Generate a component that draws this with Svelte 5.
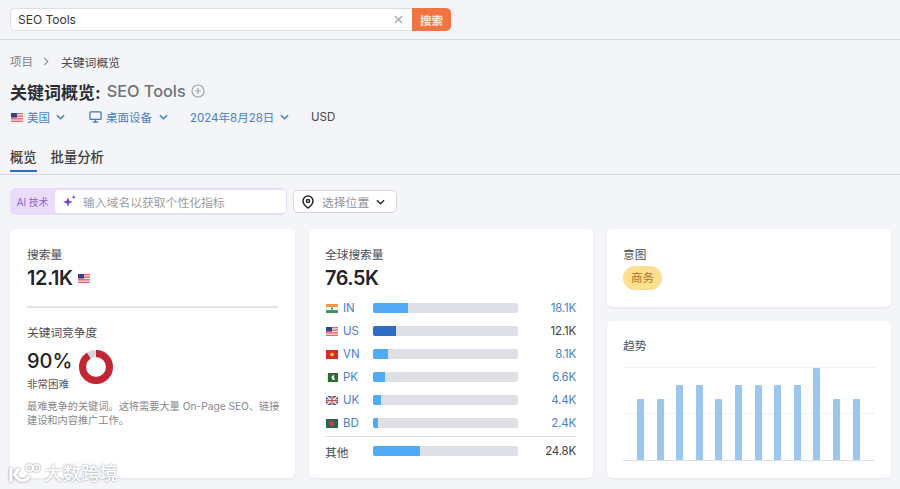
<script>
  const rows = [
    { code: 'IN', pct: 24, value: '18.1K' },
    { code: 'US', pct: 16, value: '12.1K', current: true },
    { code: 'VN', pct: 10.5, value: '8.1K' },
    { code: 'PK', pct: 8.6, value: '6.6K' },
    { code: 'UK', pct: 5.8, value: '4.4K' },
    { code: 'BD', pct: 3.2, value: '2.4K' }
  ];
  const trend = [61, 61, 75, 75, 61, 75, 75, 75, 75, 92, 61, 61];
</script>

{#snippet flag(code)}
  <svg class="flag" viewBox="0 0 12 9" aria-hidden="true">
    {#if code === 'US'}
      <rect width="12" height="9" fill="#e8666c" />
      <rect y="1.3" width="12" height="1.2" fill="#f6e6e8" />
      <rect y="3.9" width="12" height="1.2" fill="#f6e6e8" />
      <rect y="6.5" width="12" height="1.2" fill="#f6e6e8" />
      <rect width="6" height="4.6" fill="#3c3f86" />
    {:else if code === 'IN'}
      <rect width="12" height="3" fill="#ef9d45" />
      <rect y="3" width="12" height="3" fill="#f7f7f4" />
      <rect y="6" width="12" height="3" fill="#3f9a54" />
      <circle cx="6" cy="4.5" r="1" fill="#3d5a9e" />
    {:else if code === 'VN'}
      <rect width="12" height="9" fill="#d92b2b" />
      <circle cx="6" cy="4.5" r="1.8" fill="#f7d23e" />
    {:else if code === 'PK'}
      <rect width="12" height="9" fill="#e8efe4" />
      <rect x="2" width="10" height="9" fill="#2c6a2e" />
      <path d="M8.6 2.6a2.2 2.2 0 1 0 .8 3.4 2 2 0 0 1-.8-3.4z" fill="#fff" />
    {:else if code === 'UK'}
      <rect width="12" height="9" fill="#41467f" />
      <path d="M0 0l12 9M12 0L0 9" stroke="#f1e6ea" stroke-width="1.6" />
      <path d="M6 0v9M0 4.5h12" stroke="#f1e6ea" stroke-width="2.6" />
      <path d="M6 0v9M0 4.5h12" stroke="#d2434f" stroke-width="1.2" />
    {:else}
      <rect width="12" height="9" fill="#24694c" />
      <circle cx="5.6" cy="4.5" r="2.5" fill="#d8343f" />
    {/if}
  </svg>
{/snippet}

{#snippet chevron()}
  <svg class="chev" viewBox="0 0 10 6" aria-hidden="true"><path d="M1 1l4 4 4-4" /></svg>
{/snippet}

<div class="page">
  <header class="topbar">
    <div class="search">
      <div class="field">
        <span class="query">SEO Tools</span>
        <svg class="clear" viewBox="0 0 10 10" aria-hidden="true"><path d="M1 1l8 8M9 1l-8 8" /></svg>
      </div>
      <button class="go">搜索</button>
    </div>
  </header>

  <section class="head">
    <nav class="crumbs">
      <span class="muted">项目</span>
      <svg class="crumb-sep" viewBox="0 0 6 10" aria-hidden="true"><path d="M1 1l4 4-4 4" /></svg>
      <span class="current-crumb">关键词概览</span>
    </nav>
    <h1><span>关键词概览:</span> <em>SEO Tools</em>
      <svg class="plus" viewBox="0 0 14 14" aria-hidden="true"><circle cx="7" cy="7" r="6" /><path d="M7 4v6M4 7h6" /></svg>
    </h1>
    <div class="filters">
      <span class="filter first">{@render flag('US')}美国{@render chevron()}</span>
      <span class="filter second">
        <svg class="monitor" viewBox="0 0 14 13" aria-hidden="true"><rect x="1" y="1" width="12" height="8" rx="1" /><path d="M4 12h6M7 9v3" /></svg>
        桌面设备{@render chevron()}
      </span>
      <span class="filter third">2024年8月28日{@render chevron()}</span>
      <span class="usd">USD</span>
    </div>
    <div class="tabs">
      <span class="tab active">概览</span>
      <span class="tab">批量分析</span>
    </div>
  </section>

  <section class="tools">
    <div class="ai">
      <span class="ai-label">AI 技术</span>
      <div class="ai-field">
        <svg class="spark" viewBox="0 0 14 14" aria-hidden="true">
          <path d="M5.5 3l1.2 3.3L10 7.5 6.7 8.7 5.5 12 4.3 8.7 1 7.5l3.3-1.2z" />
          <path d="M11 1l.6 1.4L13 3l-1.4.6L11 5l-.6-1.4L9 3l1.4-.6z" />
        </svg>
        <span>输入域名以获取个性化指标</span>
      </div>
    </div>
    <div class="location">
      <svg class="pin" viewBox="0 0 12 14" aria-hidden="true"><path d="M6 1a5 5 0 0 1 5 5c0 3-3 5.6-5 7-2-1.4-5-4-5-7a5 5 0 0 1 5-5z" /><circle cx="6" cy="6" r="1.6" /></svg>
      <span>选择位置</span>
      <svg class="chev dark" viewBox="0 0 10 6" aria-hidden="true"><path d="M1 1l4 4 4-4" /></svg>
    </div>
  </section>

  <main class="grid">
    <article class="card volume">
      <h2>搜索量</h2>
      <div class="metric">12.1K {@render flag('US')}</div>
      <hr />
      <h2 class="kd-title">关键词竞争度</h2>
      <div class="kd">
        <div>
          <div class="pct">90%</div>
          <div class="level">非常困难</div>
        </div>
        <svg class="donut" viewBox="0 0 34 34" aria-hidden="true">
          <circle cx="17" cy="17" r="13.5" class="donut-bg" />
          <circle cx="17" cy="17" r="13.5" class="donut-fg" pathLength="100" stroke-dasharray="91 9" transform="rotate(-90 17 17)" />
        </svg>
      </div>
      <p>最难竞争的关键词。这将需要大量 On-Page SEO、链接建设和内容推广工作。</p>
    </article>

    <article class="card global">
      <h2>全球搜索量</h2>
      <div class="metric">76.5K</div>
      <div class="rows">
        {#each rows as r}
          <div class="row">
            {@render flag(r.code)}
            <span class="code">{r.code}</span>
            <span class="track"><span class="fill" class:current={r.current} style="width:{r.pct}%"></span></span>
            <span class="val" class:plain={r.current}>{r.value}</span>
          </div>
        {/each}
      </div>
      <div class="row other">
        <span class="other-label">其他</span>
        <span class="track"><span class="fill" style="width:32.5%"></span></span>
        <span class="val plain">24.8K</span>
      </div>
    </article>

    <div class="side">
      <article class="card intent">
        <h2>意图</h2>
        <span class="pill">商务</span>
      </article>
      <article class="card trend">
        <h2>趋势</h2>
        <div class="chart">
          <i class="gridline top"></i>
          <i class="gridline mid"></i>
          <div class="bars">
            {#each trend as h}
              <span class="bar" style="height:{h}px"></span>
            {/each}
          </div>
        </div>
      </article>
    </div>
  </main>

  <div class="mark">
    <svg viewBox="0 0 32 22" aria-hidden="true">
      <path d="M2 6v14" />
      <path d="M10 6 5.500 12.500c2 3.500 4.500 6 8 6 3 0 5.500-1.500 6.500-4.500" />
      <circle class="thin" cx="20.500" cy="6" r="3.200" />
      <circle class="thin" cx="27.500" cy="6" r="3.200" />
    </svg>
    <span>大数跨境</span>
  </div>
</div>

<style>
  :global(body) {
    margin: 0;
    background: #f3f5f9;
  }
  .page {
    position: relative;
    width: 900px;
    height: 489px;
    overflow: hidden;
    background: #f3f5f9;
    color: #2a2c31;
    font-family: Inter, "Noto Sans CJK SC", sans-serif;
    font-size: 12px;
  }
  .topbar {
    height: 40px;
    box-sizing: border-box;
    padding: 8px 10px 0;
    border-bottom: 1px solid #d5d7dc;
  }
  .search {
    display: flex;
    width: 441px;
    height: 23px;
  }
  .field {
    flex: 1;
    display: flex;
    align-items: center;
    justify-content: space-between;
    padding: 0 9px 0 7px;
    background: #fff;
    border: 1px solid #dcdee3;
    border-right: 0;
    border-radius: 5px 0 0 5px;
  }
  .query {
    font-size: 12px;
    color: #34363b;
  }
  .clear {
    width: 9px;
    height: 9px;
    fill: none;
    stroke: #a6a9af;
    stroke-width: 1.5;
  }
  .go {
    width: 39px;
    border: 0;
    padding: 0;
    border-radius: 0 5px 5px 0;
    background: #ef7642;
    color: #fde9df;
    font: 600 11.5px Inter, "Noto Sans CJK SC", sans-serif;
  }
  .head {
    box-sizing: border-box;
    height: 135px;
    padding: 13px 0 0 10px;
    border-bottom: 1px solid #d5d7dc;
  }
  .crumbs {
    display: flex;
    align-items: center;
    height: 16px;
    font-size: 11.5px;
    color: #44464c;
  }
  .current-crumb {
    font-size: 11.8px;
  }
  .muted {
    color: #7d8087;
  }
  .crumb-sep {
    width: 6px;
    height: 9px;
    margin: 0 12px 0 10px;
    fill: none;
    stroke: #8c8f96;
    stroke-width: 1.2;
  }
  h1 {
    display: flex;
    align-items: center;
    gap: 6px;
    margin: 11px 0 0;
    height: 22px;
    font-size: 17px;
    font-weight: 700;
    color: #2c2e33;
  }
  h1 em {
    font-style: normal;
    font-weight: 500;
    color: #6f7278;
    font-size: 16.3px;
  }
  .plus {
    width: 14px;
    height: 14px;
    margin-left: -1px;
    fill: none;
    stroke: #a3a6ac;
    stroke-width: 1.2;
  }
  .filters {
    display: flex;
    align-items: center;
    height: 16px;
    margin-top: 7px;
    font-size: 11.5px;
    color: #4a7ec8;
  }
  .filter {
    display: flex;
    align-items: center;
  }
  .filter .flag {
    margin-left: 1px;
    margin-right: 4px;
  }
  .first {
    width: 79px;
  }
  .second {
    width: 101px;
  }
  .third {
    width: 121px;
  }
  .usd {
    color: #44464c;
  }
  .monitor {
    width: 13px;
    height: 12px;
    margin-right: 4px;
    fill: none;
    stroke: #3f76c4;
    stroke-width: 1.4;
  }
  .chev {
    width: 9px;
    height: 6px;
    margin-left: 6px;
    fill: none;
    stroke: #3f76c4;
    stroke-width: 1.6;
  }
  .second .chev {
    margin-left: 7px;
  }
  .chev.dark {
    stroke: #2a2c31;
    margin-left: 7px;
  }
  .tabs {
    display: flex;
    gap: 14px;
    margin-top: 22px;
    font-size: 13.3px;
    font-weight: 500;
  }
  .tab {
    height: 25px;
    color: #3c3e44;
    line-height: 20px;
    box-sizing: border-box;
  }
  .tab.active {
    border-bottom: 2px solid #2f6fc9;
  }
  .tools {
    display: flex;
    align-items: center;
    gap: 6px;
    margin: 13px 0 0 10px;
  }
  .ai {
    display: flex;
    align-items: center;
    width: 277px;
    height: 27px;
    box-sizing: border-box;
    padding: 2px 1px 2px 0;
    background: #e9dcfb;
    border-radius: 6px;
  }
  .ai-label {
    width: 45px;
    flex: none;
    text-align: center;
    font-size: 9.8px;
    color: #8d5fdc;
  }
  .ai-field {
    flex: 1;
    height: 100%;
    display: flex;
    align-items: center;
    gap: 6px;
    padding-left: 7px;
    box-sizing: border-box;
    background: #fff;
    border-radius: 4px;
    color: #9a9da4;
    font-size: 11.8px;
  }
  .spark {
    width: 15px;
    height: 15px;
    fill: #7c3fdc;
  }
  .location {
    display: flex;
    align-items: center;
    width: 104px;
    height: 23px;
    box-sizing: border-box;
    padding-left: 8px;
    background: #fff;
    border: 1px solid #d6d8dd;
    border-radius: 5px;
    color: #8f9299;
    font-size: 11.8px;
  }
  .pin {
    width: 12px;
    height: 14px;
    margin-right: 8px;
    fill: none;
    stroke: #26282c;
    stroke-width: 1.5;
  }
  .grid {
    display: grid;
    grid-template-columns: 285px 284px 284px;
    gap: 14px;
    margin: 14px 0 0 10px;
    height: 249px;
  }
  .card {
    background: #fff;
    border-radius: 5px;
    box-shadow: 0 1px 2px rgba(30, 40, 60, 0.08);
    box-sizing: border-box;
    padding: 18px 17px 0;
  }
  h2 {
    margin: 0;
    height: 16px;
    line-height: 16px;
    font-size: 11.7px;
    font-weight: 400;
    color: #4c4e54;
  }
  .metric {
    display: flex;
    align-items: center;
    gap: 5px;
    height: 24px;
    margin-top: 3px;
    font-size: 19.8px;
    font-weight: 600;
    letter-spacing: -0.4px;
    color: #222429;
  }
  .flag {
    width: 12px;
    height: 9px;
    flex: none;
  }
  hr {
    height: 2px;
    margin: 16px 0 0;
    border: 0;
    background: #e2e3e7;
  }
  .kd-title {
    margin-top: 17px;
  }
  .kd {
    display: flex;
    gap: 7px;
    margin-top: 7px;
  }
  .pct {
    height: 26px;
    line-height: 26px;
    font-size: 20px;
    font-weight: 500;
    color: #222429;
  }
  .level {
    margin-top: 4px;
    font-size: 10.5px;
    line-height: 14px;
    color: #55575d;
  }
  .donut {
    width: 34px;
    height: 34px;
    margin-top: 2px;
    fill: none;
    stroke-width: 7;
  }
  .donut-bg {
    stroke: #d5d6da;
  }
  .donut-fg {
    stroke: #c32535;
  }
  .card p {
    margin: 7px -4px 0 0;
    font-size: 10.2px;
    line-height: 14px;
    color: #85888f;
  }
  .global {
    padding: 18px 17px 0 16px;
  }
  .rows {
    display: flex;
    flex-direction: column;
    gap: 13px;
    margin-top: 13px;
  }
  .row {
    display: flex;
    align-items: center;
    height: 10px;
  }
  .row > .flag {
    margin-left: 1px;
  }
  .code {
    width: 30px;
    margin-left: 5px;
    color: #4a7ec8;
    font-size: 11.5px;
  }
  .track {
    width: 145px;
    height: 10px;
    flex: none;
    display: block;
    border-radius: 2px;
    background: #dfe0e5;
    overflow: hidden;
  }
  .fill {
    display: block;
    height: 100%;
    background: #4fabf5;
  }
  .fill.current {
    background: #2b6cc4;
  }
  .val {
    flex: 1;
    text-align: right;
    color: #4a7ec8;
    font-size: 11.5px;
    letter-spacing: -0.2px;
  }
  .val.plain {
    color: #3c3e44;
  }
  .other {
    margin-top: 8px;
    padding-top: 9px;
    border-top: 1px solid #dedfe3;
    height: 10px;
    box-sizing: content-box;
  }
  .other-label {
    width: 48px;
    font-size: 11.7px;
    color: #44464c;
  }
  .side {
    display: flex;
    flex-direction: column;
    gap: 14px;
  }
  .side .card {
    padding-left: 16px;
  }
  .intent {
    height: 78px;
  }
  .pill {
    display: block;
    width: 39px;
    height: 24px;
    margin-top: 3px;
    line-height: 24px;
    text-align: center;
    border-radius: 12px;
    background: #fbe08f;
    color: #a9772e;
    font-size: 11.5px;
  }
  .side .trend {
    height: 157px;
    padding-top: 17px;
  }
  .chart {
    position: relative;
    height: 93px;
    margin-top: 13px;
    width: 251px;
    border-bottom: 1px solid #dcdde2;
  }
  .gridline {
    position: absolute;
    left: 0;
    right: -2px;
    height: 1px;
    background: #f1f2f5;
  }
  .gridline.top {
    top: 0;
  }
  .gridline.mid {
    top: 46px;
  }
  .bars {
    position: absolute;
    inset: 0;
    display: flex;
    align-items: flex-end;
    gap: 12.6px;
    padding-left: 14px;
  }
  .bar {
    width: 7px;
    flex: none;
    border-radius: 1px 1px 0 0;
    background: #9dc6ec;
  }
  .mark {
    position: absolute;
    left: 9px;
    top: 460px;
    display: flex;
    align-items: center;
    gap: 3px;
    color: #fff;
    font-size: 18.5px;
    font-weight: 500;
    line-height: 24px;
    text-shadow: 0 0 2px rgba(90, 95, 105, 0.75);
  }
  .mark span {
    margin-top: 1px;
  }
  .mark svg {
    width: 32px;
    height: 22px;
    fill: none;
    stroke: #fff;
    stroke-width: 3.2;
    filter: drop-shadow(0 0 1px rgba(90, 95, 105, 0.8));
  }
  .mark .thin {
    stroke-width: 1.4;
  }
</style>
